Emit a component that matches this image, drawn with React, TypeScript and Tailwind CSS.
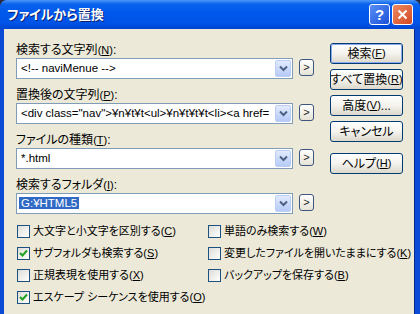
import type { ReactNode } from "react";

// XP風「ファイルから置換」ダイアログ
// palt でかなを詰めて MS UI Gothic の幅に寄せる
const font = "font-['Liberation_Sans','Noto_Sans_CJK_JP',sans-serif] [font-feature-settings:'palt']";

function Key({ c }: { c: string }): JSX.Element {
  return (
    <span className="text-[11px]">
      (<span className="underline">{c}</span>)
    </span>
  );
}

function Chevron(): JSX.Element {
  return (
    <svg width="9" height="7" viewBox="0 0 9 7">
      <path d="M1 1.5 L4.5 5 L8 1.5" fill="none" stroke="#4D6185" strokeWidth="2" />
    </svg>
  );
}

function Combo({ children }: { children: ReactNode }): JSX.Element {
  return (
    <div className="flex items-start gap-[6px]">
      <div className="flex h-[21px] w-[277px] items-center border border-[#7F9DB9] bg-white pr-[1px]">
        <div className="min-w-0 flex-1 overflow-hidden whitespace-nowrap pl-[4px] text-[11.5px] leading-[15px]">
          {children}
        </div>
        <div className="flex h-[17px] w-[16px] shrink-0 items-center justify-center rounded-[2px] border border-[#BBCDF5] bg-gradient-to-b from-[#E2EBFD] to-[#B5CAF7]">
          <Chevron />
        </div>
      </div>
      <div className="mt-[1px] flex h-[17px] w-[15px] items-center justify-center rounded-[3px] border border-[#3D5680] bg-gradient-to-b from-white to-[#E6E3D6] text-[11px] leading-none text-[#222]">
        &gt;
      </div>
    </div>
  );
}

function Field({ label, children }: { label: ReactNode; children: ReactNode }): JSX.Element {
  return (
    <div className="mb-[9px]">
      <div className="h-[15px] text-[12px] leading-[15px]">{label}</div>
      <Combo>{children}</Combo>
    </div>
  );
}

function Btn({ children, primary }: { children: ReactNode; primary?: boolean }): JSX.Element {
  return (
    <div className="h-[21px] w-[73px] rounded-[3px] border border-[#003C74] bg-gradient-to-b from-white via-[#F4F3EE] to-[#DCD8CB]">
      <div
        className={
          primary
            ? "flex h-full w-full items-center justify-center whitespace-nowrap rounded-[2px] border border-[#8CA8EE] text-[12px] leading-none"
            : "flex h-full w-full items-center justify-center whitespace-nowrap text-[12px] leading-none"
        }
      >
        {children}
      </div>
    </div>
  );
}

function Check({ checked, children }: { checked?: boolean; children: ReactNode }): JSX.Element {
  return (
    <div className="flex h-[22px] items-center gap-[3px] whitespace-nowrap text-[11px] leading-none">
      <div className="flex h-[13px] w-[13px] shrink-0 items-center justify-center border border-[#1C5180] bg-gradient-to-br from-[#DCDCD7] to-white">
        {checked ? (
          <svg width="9" height="9" viewBox="0 0 9 9">
            <path d="M1 4 L3.5 6.5 L8 1.5" fill="none" stroke="#21A121" strokeWidth="2" />
          </svg>
        ) : null}
      </div>
      <span>{children}</span>
    </div>
  );
}

export default function App(): JSX.Element {
  return (
    <div className={`h-[314px] w-[420px] overflow-hidden bg-[#2A2A3A] text-black ${font}`}>
      <div className="flex h-full flex-col rounded-t-[7px] bg-[#0B4BD6]">
        {/* タイトルバー */}
        <div className="flex h-[29px] shrink-0 items-center justify-between rounded-t-[7px] bg-[linear-gradient(180deg,#4D97F8_0%,#0A63EE_14%,#0058EC_45%,#0053E6_80%,#0045D2_100%)] pl-[7px] pr-[7px]">
          <span className="text-[13px] font-bold text-white [text-shadow:1px_1px_0_#0A1E6E]">
            ファイルから置換
          </span>
          <div className="flex gap-[2px]">
            <div className="flex h-[21px] w-[21px] items-center justify-center rounded-[3px] border border-white bg-gradient-to-br from-[#5A8FF5] to-[#1B4FD8] text-[15px] font-bold leading-none text-white">
              ?
            </div>
            <div className="flex h-[21px] w-[21px] items-center justify-center rounded-[3px] border border-white bg-gradient-to-br from-[#EB8A62] to-[#D4461E]">
              <svg width="11" height="11" viewBox="0 0 11 11">
                <path d="M1.5 1.5 L9.5 9.5 M9.5 1.5 L1.5 9.5" stroke="white" strokeWidth="2" />
              </svg>
            </div>
          </div>
        </div>

        {/* 本体 */}
        <div className="ml-[4px] mr-[5px] flex flex-1 flex-col border-r border-[#0A2A8A] bg-[#ECE9D8] pl-[12px] pt-[14px]">
          <div className="flex">
            <div className="w-[298px]">
              <Field label={<>検索する文字列<Key c="N" />:</>}>&lt;!-- naviMenue --&gt;</Field>
              <Field label={<>置換後の文字列<Key c="P" />:</>}>
                &lt;div class="nav"&gt;¥n¥t¥t&lt;ul&gt;¥n¥t¥t¥t&lt;li&gt;&lt;a href=
              </Field>
              <Field label={<>ファイルの種類<Key c="T" />:</>}>*.html</Field>
              <Field label={<>検索するフォルダ<Key c="I" />:</>}>
                <span className="ml-[-2px] bg-[#316AC5] px-[2px] text-white">G:¥HTML5</span>
              </Field>
            </div>
            <div className="ml-[16px] flex flex-col gap-[5px]">
              <Btn primary>
                検索<Key c="F" />
              </Btn>
              <Btn>
                すべて置換<Key c="R" />
              </Btn>
              <Btn>
                高度<Key c="V" />...
              </Btn>
              <Btn>キャンセル</Btn>
              <div className="mt-[6px]">
                <Btn>
                  ヘルプ<Key c="H" />
                </Btn>
              </div>
            </div>
          </div>

          <div className="-mt-[3px] grid grid-cols-[191px_1fr] pl-[1px]">
            <Check>
              大文字と小文字を区別する<Key c="C" />
            </Check>
            <Check>
              単語のみ検索する<Key c="W" />
            </Check>
            <Check checked>
              サブフォルダも検索する<Key c="S" />
            </Check>
            <Check>
              変更したファイルを開いたままにする<Key c="K" />
            </Check>
            <Check>
              正規表現を使用する<Key c="X" />
            </Check>
            <Check>
              バックアップを保存する<Key c="B" />
            </Check>
            <Check checked>
              エスケープ シーケンスを使用する<Key c="O" />
            </Check>
          </div>
        </div>
      </div>
    </div>
  );
}
